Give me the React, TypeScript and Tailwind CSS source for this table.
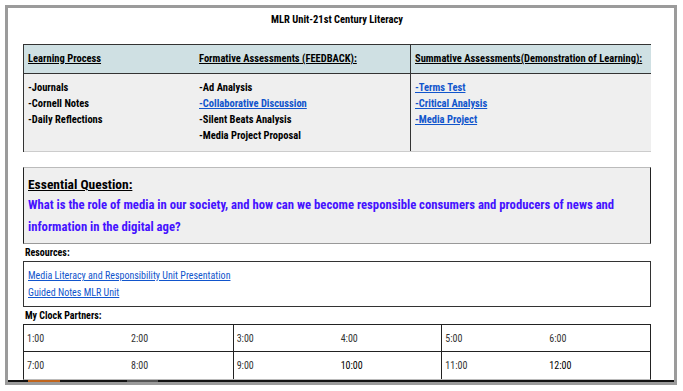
import React from "react";

const F = { fontFamily: '"Roboto Condensed", "Open Sans Condensed", "Liberation Sans", sans-serif' };

export default function App() {
  return (
    <div className="w-[683px] h-[391px] bg-white overflow-hidden" style={F}>
      <div className="ml-[5px] mt-[5px] w-[672px] h-[380px] border-[3px] border-[#9b9b9b] bg-white flex flex-col">
        <div className="flex-1 flex flex-col pl-[15px] pr-[23px] overflow-hidden">
          <div className="h-[24px] flex items-center justify-center text-[10.5px] font-bold text-black">
            MLR Unit-21st Century Literacy
          </div>
          {/* top table */}
          <div className="mt-[12px] w-[628px] border-l border-t border-[#333] flex flex-col">
            <div className="h-[29px] bg-[#cfe0e3] border-b border-[#333] flex text-[10.5px] font-bold text-black underline">
              <div className="w-[175px] pl-[4px] flex items-center">Learning Process</div>
              <div className="w-[211px] flex items-center">Formative Assessments (FEEDBACK):</div>
              <div className="flex-1 border-l border-[#333] pl-[4px] flex items-center whitespace-nowrap">Summative Assessments(Demonstration of Learning):</div>
            </div>
            <div className="h-[78px] bg-[#efefef] border-b border-[#cccccc] flex text-[10.5px] font-bold text-black leading-[16px]">
              <div className="w-[175px] pl-[4px] pt-[6px]">
                <div>-Journals</div>
                <div>-Cornell Notes</div>
                <div>-Daily Reflections</div>
              </div>
              <div className="w-[211px] pt-[6px]">
                <div>-Ad Analysis</div>
                <div className="text-[#1155cc] underline">-Collaborative Discussion</div>
                <div>-Silent Beats Analysis</div>
                <div>-Media Project Proposal</div>
              </div>
              <div className="flex-1 border-l border-[#333] pl-[4px] pt-[6px] text-[#1155cc] underline">
                <div>-Terms Test</div>
                <div>-Critical Analysis</div>
                <div>-Media Project</div>
              </div>
            </div>
          </div>
          {/* essential question */}
          <div className="mt-[15px] w-[628px] h-[77px] bg-[#efefef] border-t border-[#bbbbbb] border-l border-r border-b border-l-[#222] border-r-[#222] border-b-[#999] pl-[4px] pt-[6px]">
            <div className="text-[13.5px] font-bold underline text-black leading-[20px]">Essential Question:</div>
            <div className="text-[12.7px] font-bold text-[#4512ff] leading-[22px]">
              What is the role of media in our society, and how can we become responsible consumers and producers of news and information in the digital age?
            </div>
          </div>
          <div className="h-[17px] flex items-center pl-[2px] text-[10px] font-bold text-black">Resources:</div>
          <div className="w-[628px] h-[46px] border border-[#333] pl-[4px] pt-[5px] text-[10px] text-[#1155cc] underline leading-[17px]">
            <div>Media Literacy and Responsibility Unit Presentation</div>
            <div>Guided Notes MLR Unit</div>
          </div>
          <div className="h-[17px] flex items-center pl-[2px] text-[10px] font-bold text-black">My Clock Partners:</div>
          <div className="w-[628px] border-t border-l border-r border-[#222] border-b border-b-[#bbb] grid grid-cols-3 text-[10px] text-[#333]">
            {[
              ["1:00", "2:00", "7:00", "8:00"],
              ["3:00", "4:00", "9:00", "10:00"],
              ["5:00", "6:00", "11:00", "12:00"],
            ].map((c, i) => (
              <div key={i} className={i > 0 ? "border-l border-[#222]" : ""}>
                <div className="h-[27px] border-b border-[#222] flex items-center">
                  <div className="w-[107px] pl-[3px]">{c[0]}</div>
                  <div>{c[1]}</div>
                </div>
                <div className="h-[27px] flex items-center">
                  <div className="w-[107px] pl-[3px]">{c[2]}</div>
                  <div className={i > 0 ? "text-black" : ""}>{c[3]}</div>
                </div>
              </div>
            ))}
          </div>
        </div>
        <div className="h-[2px] bg-[#111] flex">
          <div className="w-[20px]" />
          <div className="w-[32px] bg-[#c0651c]" />
          <div className="w-[67px]" />
          <div className="w-[31px] bg-[#555]" />
        </div>
      </div>
    </div>
  );
}
